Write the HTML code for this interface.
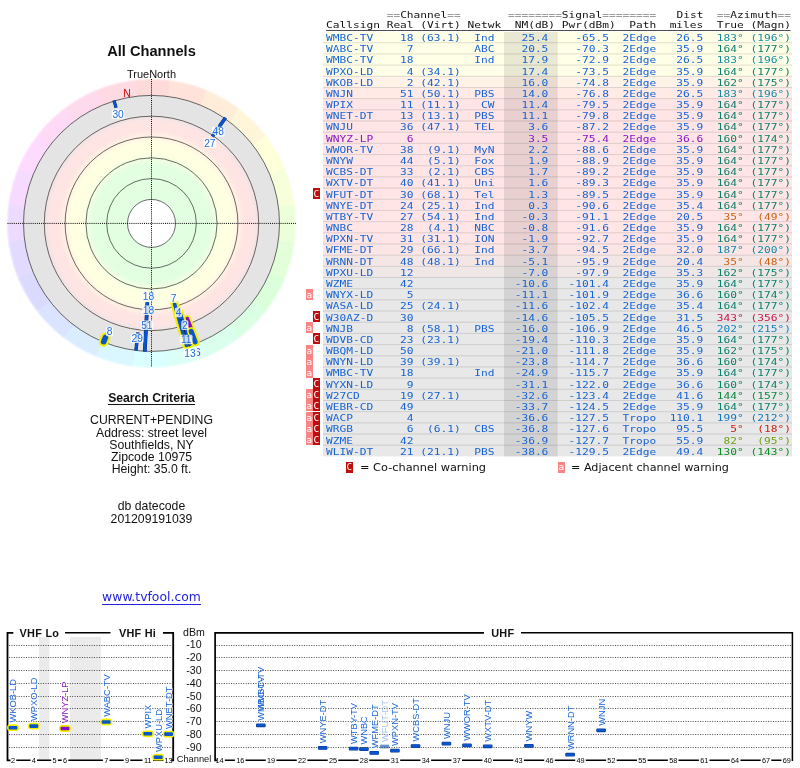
<!DOCTYPE html>
<html><head><meta charset="utf-8"><title>TV Fool - All Channels</title>
<style>
html,body{margin:0;padding:0;background:#fff;}
body{width:800px;height:768px;position:relative;overflow:hidden;font-family:"Liberation Sans",sans-serif;color:#111;}
#g{position:absolute;left:0;top:0;}
svg,.c,.lg{will-change:transform;}
.c{position:absolute;white-space:nowrap;text-align:center;left:0;width:303px;line-height:1;}
.m{position:absolute;white-space:pre;line-height:1;font-family:"DejaVu Sans Mono","Liberation Mono",monospace;font-size:9.3px;transform:scaleX(1.2038);transform-origin:0 0;left:325.7px;will-change:transform;}

.b{color:#1763d4;}
.p{color:#8a14c6;}
.k{color:#111;}
.e{color:#9c9c9c;font-weight:bold;}
.w{will-change:transform;position:absolute;width:6.74px;height:11.2px;color:#fff;font-family:"DejaVu Sans Mono","Liberation Mono",monospace;font-size:9.3px;line-height:11.2px;text-align:center;}
.wa{background:#fb8585;}
.wc{background:#bf0d0d;}
.lg{position:absolute;font-family:"DejaVu Sans","Liberation Sans",sans-serif;font-size:11.1px;line-height:1;white-space:nowrap;color:#111;}
svg text{font-family:"Liberation Sans",sans-serif;}
</style></head><body>

<svg id="g" width="800" height="768" viewBox="0 0 800 768">
<defs>
<radialGradient id="disk" gradientUnits="userSpaceOnUse" cx="151.5" cy="223.4" r="128">
<stop offset="0.0000" stop-color="#ffffff"/>
<stop offset="0.1844" stop-color="#ffffff"/>
<stop offset="0.1906" stop-color="#e2ffe2"/>
<stop offset="0.4531" stop-color="#e2ffe2"/>
<stop offset="0.5469" stop-color="#ffffe2"/>
<stop offset="0.6328" stop-color="#ffffe2"/>
<stop offset="0.7266" stop-color="#ffe4e4"/>
<stop offset="0.7969" stop-color="#ffe4e4"/>
<stop offset="0.8594" stop-color="#e4e4e4"/>
<stop offset="1.0000" stop-color="#e4e4e4"/>
</radialGradient>
<radialGradient id="fade" gradientUnits="userSpaceOnUse" cx="151.5" cy="223.4" r="146">
<stop offset="0" stop-color="#fff" stop-opacity="0"/><stop offset="0.9760" stop-color="#fff" stop-opacity="0"/><stop offset="1" stop-color="#fff" stop-opacity="1"/>
</radialGradient>
</defs>
<path d="M151.5 223.4L132.57 79.64A145 145 0 0 1 171.43 79.78Z" fill="#ffdada"/>
<path d="M151.5 223.4L170.43 79.64A145 145 0 0 1 207.92 89.83Z" fill="#ffe3da"/>
<path d="M151.5 223.4L206.99 89.44A145 145 0 0 1 240.57 108.98Z" fill="#ffedda"/>
<path d="M151.5 223.4L239.77 108.36A145 145 0 0 1 267.15 135.93Z" fill="#fff6da"/>
<path d="M151.5 223.4L266.54 135.13A145 145 0 0 1 285.85 168.85Z" fill="#ffffda"/>
<path d="M151.5 223.4L285.46 167.91A145 145 0 0 1 295.39 205.48Z" fill="#f6ffda"/>
<path d="M151.5 223.4L295.26 204.47A145 145 0 0 1 295.12 243.33Z" fill="#edffda"/>
<path d="M151.5 223.4L295.26 242.33A145 145 0 0 1 285.07 279.82Z" fill="#e3ffda"/>
<path d="M151.5 223.4L285.46 278.89A145 145 0 0 1 265.92 312.47Z" fill="#daffda"/>
<path d="M151.5 223.4L266.54 311.67A145 145 0 0 1 238.97 339.05Z" fill="#daffe3"/>
<path d="M151.5 223.4L239.77 338.44A145 145 0 0 1 206.05 357.75Z" fill="#daffed"/>
<path d="M151.5 223.4L206.99 357.36A145 145 0 0 1 169.42 367.29Z" fill="#dafff6"/>
<path d="M151.5 223.4L170.43 367.16A145 145 0 0 1 131.57 367.02Z" fill="#daffff"/>
<path d="M151.5 223.4L132.57 367.16A145 145 0 0 1 95.08 356.97Z" fill="#daf6ff"/>
<path d="M151.5 223.4L96.01 357.36A145 145 0 0 1 62.43 337.82Z" fill="#daedff"/>
<path d="M151.5 223.4L63.23 338.44A145 145 0 0 1 35.85 310.87Z" fill="#dae3ff"/>
<path d="M151.5 223.4L36.46 311.67A145 145 0 0 1 17.15 277.95Z" fill="#dadaff"/>
<path d="M151.5 223.4L17.54 278.89A145 145 0 0 1 7.61 241.32Z" fill="#e3daff"/>
<path d="M151.5 223.4L7.74 242.33A145 145 0 0 1 7.88 203.47Z" fill="#eddaff"/>
<path d="M151.5 223.4L7.74 204.47A145 145 0 0 1 17.93 166.98Z" fill="#f6daff"/>
<path d="M151.5 223.4L17.54 167.91A145 145 0 0 1 37.08 134.33Z" fill="#ffdaff"/>
<path d="M151.5 223.4L36.46 135.13A145 145 0 0 1 64.03 107.75Z" fill="#ffdaf6"/>
<path d="M151.5 223.4L63.23 108.36A145 145 0 0 1 96.95 89.05Z" fill="#ffdaed"/>
<path d="M151.5 223.4L96.01 89.44A145 145 0 0 1 133.58 79.51Z" fill="#ffdae3"/>
<circle cx="151.5" cy="223.4" r="147" fill="url(#fade)"/>
<circle cx="151.5" cy="223.4" r="128" fill="url(#disk)"/>
<circle cx="151.5" cy="223.4" r="24.0" fill="none" stroke="#262626" stroke-width="0.68"/>
<circle cx="151.5" cy="223.4" r="44.8" fill="none" stroke="#262626" stroke-width="0.68"/>
<circle cx="151.5" cy="223.4" r="65.6" fill="none" stroke="#262626" stroke-width="0.68"/>
<circle cx="151.5" cy="223.4" r="86.4" fill="none" stroke="#262626" stroke-width="0.68"/>
<circle cx="151.5" cy="223.4" r="107.2" fill="none" stroke="#262626" stroke-width="0.68"/>
<circle cx="151.5" cy="223.4" r="128.0" fill="none" stroke="#262626" stroke-width="0.68"/>
<path d="M7.5 223.4H296" stroke="#000" stroke-width="1" stroke-dasharray="1 1.1" fill="none"/>
<path d="M151.5 79V367" stroke="#000" stroke-width="1" stroke-dasharray="1 1.1" fill="none"/>
<path d="M116.12 107.69L113.93 100.51" stroke="#062a66" stroke-width="3.2"/>
<path d="M116.12 107.69L113.93 100.51" stroke="#0a55cc" stroke-width="2.4"/>
<path d="M212.87 135.75L225.20 118.14" stroke="#062a66" stroke-width="2.4"/>
<path d="M212.87 135.75L225.20 118.14" stroke="#0a55cc" stroke-width="1.6"/>
<path d="M219.47 126.33L225.49 117.73" stroke="#062a66" stroke-width="3.6"/>
<path d="M219.47 126.33L225.49 117.73" stroke="#0a55cc" stroke-width="2.8"/>
<path d="M138.09 332.58L135.90 350.45" stroke="#062a66" stroke-width="3.4"/>
<path d="M138.09 332.58L135.90 350.45" stroke="#0a55cc" stroke-width="2.6"/>
<path d="M147.37 302.29L144.77 351.72" stroke="#062a66" stroke-width="3.8"/>
<path d="M147.37 302.29L144.77 351.72" stroke="#0a55cc" stroke-width="3.0"/>
<path d="M105.42 337.44L103.70 341.71" stroke="#f4ee00" stroke-width="9.8" stroke-linecap="round"/>
<path d="M105.42 337.44L103.70 341.71" stroke="#0a55cc" stroke-width="5.6" stroke-linecap="round"/>
<path d="M187.22 318.94L195.98 342.36" stroke="#f4ee00" stroke-width="7.6" stroke-linecap="round"/>
<path d="M187.22 318.94L195.98 342.36" stroke="#8410c8" stroke-width="4.2" stroke-linecap="round"/>
<path d="M174.52 303.67L186.51 345.48" stroke="#f4ee00" stroke-width="8.2" stroke-linecap="round"/>
<path d="M179.47 311.04L190.11 344.39" stroke="#f4ee00" stroke-width="7.2" stroke-linecap="round"/>
<path d="M174.52 303.67L186.51 345.48" stroke="#0a55cc" stroke-width="3.6" stroke-linecap="round"/>
<path d="M179.47 311.04L190.11 344.39" stroke="#0a55cc" stroke-width="3.4" stroke-linecap="round"/>
<path d="M180.74 319.03L189.22 346.76" stroke="#08204a" stroke-width="1"/>
<path d="M191.21 331.33L195.11 341.93" stroke="#f4ee00" stroke-width="8.2" stroke-linecap="round"/>
<path d="M191.21 331.33L195.11 341.93" stroke="#0a55cc" stroke-width="5.0" stroke-linecap="round"/>
<clipPath id="c6"><rect x="197.2" y="340" width="8" height="20"/></clipPath><text x="197.9" y="355.6" font-size="10.2" fill="#8410c8" text-anchor="middle" clip-path="url(#c6)">6</text>
<rect x="111.8" y="109.5" width="12.7" height="9.6" rx="1.5" fill="#fff" fill-opacity="0.80"/>
<text x="118.1" y="118.0" font-size="10.2" fill="#1f6fe0" text-anchor="middle">30</text>
<rect x="211.8" y="126.8" width="12.7" height="9.6" rx="1.5" fill="#fff" fill-opacity="0.80"/>
<text x="218.2" y="135.2" font-size="10.2" fill="#1f6fe0" text-anchor="middle">48</text>
<rect x="203.5" y="138.4" width="12.7" height="9.6" rx="1.5" fill="#fff" fill-opacity="0.80"/>
<text x="209.8" y="146.8" font-size="10.2" fill="#1f6fe0" text-anchor="middle">27</text>
<rect x="142.2" y="291.5" width="12.7" height="9.6" rx="1.5" fill="#fff" fill-opacity="0.80"/>
<text x="148.5" y="299.9" font-size="10.2" fill="#1f6fe0" text-anchor="middle">18</text>
<rect x="142.2" y="305.5" width="12.7" height="9.6" rx="1.5" fill="#fff" fill-opacity="0.80"/>
<text x="148.5" y="313.9" font-size="10.2" fill="#1f6fe0" text-anchor="middle">18</text>
<rect x="140.5" y="320.5" width="12.7" height="9.6" rx="1.5" fill="#fff" fill-opacity="0.80"/>
<text x="146.8" y="328.9" font-size="10.2" fill="#1f6fe0" text-anchor="middle">51</text>
<rect x="130.8" y="333.5" width="12.7" height="9.6" rx="1.5" fill="#fff" fill-opacity="0.80"/>
<text x="137.2" y="341.9" font-size="10.2" fill="#1f6fe0" text-anchor="middle">29</text>
<rect x="106.0" y="326.7" width="7.1" height="9.6" rx="1.5" fill="#fff" fill-opacity="0.80"/>
<text x="109.5" y="335.1" font-size="10.2" fill="#1f6fe0" text-anchor="middle">8</text>
<rect x="170.1" y="293.5" width="7.1" height="9.6" rx="1.5" fill="#fff" fill-opacity="0.80"/>
<text x="173.7" y="301.9" font-size="10.2" fill="#1f6fe0" text-anchor="middle">7</text>
<rect x="174.9" y="307.6" width="7.1" height="9.6" rx="1.5" fill="#fff" fill-opacity="0.80"/>
<text x="178.5" y="316.0" font-size="10.2" fill="#1f6fe0" text-anchor="middle">4</text>
<rect x="181.3" y="320.3" width="7.1" height="9.6" rx="1.5" fill="#fff" fill-opacity="0.80"/>
<text x="184.9" y="328.8" font-size="10.2" fill="#1f6fe0" text-anchor="middle">2</text>
<rect x="179.8" y="334.7" width="12.7" height="9.6" rx="1.5" fill="#fff" fill-opacity="0.80"/>
<text x="186.2" y="343.1" font-size="10.2" fill="#1f6fe0" text-anchor="middle">11</text>
<rect x="183.7" y="348.6" width="12.7" height="9.6" rx="1.5" fill="#fff" fill-opacity="0.80"/>
<text x="190.0" y="357.0" font-size="10.2" fill="#1f6fe0" text-anchor="middle">13</text>
<text x="127.1" y="96.7" font-size="10.4" fill="#cc0808" text-anchor="middle">N</text>
<path d="M212.41 136.41L213.79 134.44" stroke="#062a66" stroke-width="3.6"/>
<path d="M212.41 136.41L213.79 134.44" stroke="#0a55cc" stroke-width="2.8"/>
<rect x="39" y="637" width="10.4" height="123" fill="#ebebeb"/>
<rect x="70" y="637" width="31" height="123" fill="#ebebeb"/>
<path d="M9 645.5H172M216.5 645.5H792" stroke="#4a4a4a" stroke-width="1" stroke-dasharray="1 1.43" fill="none"/>
<path d="M9 657.5H172M216.5 657.5H792" stroke="#4a4a4a" stroke-width="1" stroke-dasharray="1 1.43" fill="none"/>
<path d="M9 670.5H172M216.5 670.5H792" stroke="#4a4a4a" stroke-width="1" stroke-dasharray="1 1.43" fill="none"/>
<path d="M9 683.5H172M216.5 683.5H792" stroke="#4a4a4a" stroke-width="1" stroke-dasharray="1 1.43" fill="none"/>
<path d="M9 696.5H172M216.5 696.5H792" stroke="#4a4a4a" stroke-width="1" stroke-dasharray="1 1.43" fill="none"/>
<path d="M9 708.5H172M216.5 708.5H792" stroke="#4a4a4a" stroke-width="1" stroke-dasharray="1 1.43" fill="none"/>
<path d="M9 721.5H172M216.5 721.5H792" stroke="#4a4a4a" stroke-width="1" stroke-dasharray="1 1.43" fill="none"/>
<path d="M9 734.5H172M216.5 734.5H792" stroke="#4a4a4a" stroke-width="1" stroke-dasharray="1 1.43" fill="none"/>
<path d="M9 747.5H172M216.5 747.5H792" stroke="#4a4a4a" stroke-width="1" stroke-dasharray="1 1.43" fill="none"/>
<path d="M13.3 632.8 H7.5 V760.3 H10.5" stroke="#000" stroke-width="1.8" fill="none"/>
<path d="M65 632.8H110.5" stroke="#000" stroke-width="1.6" fill="none"/>
<path d="M163 632.8H173.2V760.3H171.5" stroke="#000" stroke-width="1.8" fill="none"/>
<path d="M484 632.8H215.1V760.3H217" stroke="#000" stroke-width="1.7" fill="none"/>
<path d="M521 632.8H792.4V761.0999999999999" stroke="#000" stroke-width="1.5" fill="none"/>
<path d="M16.3 760.3H30.5M37.1 760.3H51.3M57.9 760.3H61.7M68.3 760.3H102.9M109.5 760.3H123.7M130.3 760.3H142.5M153.1 760.3H163.3" stroke="#000" stroke-width="1.5" fill="none"/>
<text x="13.0" y="763.1" font-size="7.3" fill="#000" text-anchor="middle">2</text>
<text x="33.8" y="763.1" font-size="7.3" fill="#000" text-anchor="middle">4</text>
<text x="54.6" y="763.1" font-size="7.3" fill="#000" text-anchor="middle">5</text>
<text x="65.0" y="763.1" font-size="7.3" fill="#000" text-anchor="middle">6</text>
<text x="106.2" y="763.1" font-size="7.3" fill="#000" text-anchor="middle">7</text>
<text x="127.0" y="763.1" font-size="7.3" fill="#000" text-anchor="middle">9</text>
<text x="147.8" y="763.1" font-size="7.3" fill="#000" text-anchor="middle">11</text>
<text x="168.6" y="763.1" font-size="7.3" fill="#000" text-anchor="middle">13</text>
<path d="M224.9 760.3H234.9M245.5 760.3H265.8M276.4 760.3H296.8M307.4 760.3H327.7M338.3 760.3H358.6M369.2 760.3H389.6M400.2 760.3H420.5M431.1 760.3H451.4M462.0 760.3H482.4M493.0 760.3H513.3M523.9 760.3H544.2M554.8 760.3H575.2M585.8 760.3H606.1M616.7 760.3H637.0M647.6 760.3H667.9M678.5 760.3H698.9M709.5 760.3H729.8M740.4 760.3H760.7M771.3 760.3H781.4" stroke="#000" stroke-width="1.5" fill="none"/>
<text x="219.6" y="763.1" font-size="7.3" fill="#000" text-anchor="middle">14</text>
<text x="240.2" y="763.1" font-size="7.3" fill="#000" text-anchor="middle">16</text>
<text x="271.1" y="763.1" font-size="7.3" fill="#000" text-anchor="middle">19</text>
<text x="302.1" y="763.1" font-size="7.3" fill="#000" text-anchor="middle">22</text>
<text x="333.0" y="763.1" font-size="7.3" fill="#000" text-anchor="middle">25</text>
<text x="363.9" y="763.1" font-size="7.3" fill="#000" text-anchor="middle">28</text>
<text x="394.9" y="763.1" font-size="7.3" fill="#000" text-anchor="middle">31</text>
<text x="425.8" y="763.1" font-size="7.3" fill="#000" text-anchor="middle">34</text>
<text x="456.7" y="763.1" font-size="7.3" fill="#000" text-anchor="middle">37</text>
<text x="487.7" y="763.1" font-size="7.3" fill="#000" text-anchor="middle">40</text>
<text x="518.6" y="763.1" font-size="7.3" fill="#000" text-anchor="middle">43</text>
<text x="549.5" y="763.1" font-size="7.3" fill="#000" text-anchor="middle">46</text>
<text x="580.5" y="763.1" font-size="7.3" fill="#000" text-anchor="middle">49</text>
<text x="611.4" y="763.1" font-size="7.3" fill="#000" text-anchor="middle">52</text>
<text x="642.3" y="763.1" font-size="7.3" fill="#000" text-anchor="middle">55</text>
<text x="673.2" y="763.1" font-size="7.3" fill="#000" text-anchor="middle">58</text>
<text x="704.2" y="763.1" font-size="7.3" fill="#000" text-anchor="middle">61</text>
<text x="735.1" y="763.1" font-size="7.3" fill="#000" text-anchor="middle">64</text>
<text x="766.0" y="763.1" font-size="7.3" fill="#000" text-anchor="middle">67</text>
<text x="786.7" y="763.1" font-size="7.3" fill="#000" text-anchor="middle">69</text>
<text x="39.4" y="636.6" font-size="10.9" font-weight="bold" fill="#111" text-anchor="middle" letter-spacing="0.25">VHF Lo</text>
<text x="137.5" y="636.6" font-size="10.9" font-weight="bold" fill="#111" text-anchor="middle" letter-spacing="0.25">VHF Hi</text>
<text x="502.8" y="636.6" font-size="10.9" font-weight="bold" fill="#111" text-anchor="middle" letter-spacing="0.25">UHF</text>
<text x="194" y="636.2" font-size="10.6" fill="#111" text-anchor="middle">dBm</text>
<text x="194" y="647.5" font-size="10.6" fill="#111" text-anchor="middle">-10</text>
<text x="194" y="661.3" font-size="10.6" fill="#111" text-anchor="middle">-20</text>
<text x="194" y="674.0" font-size="10.6" fill="#111" text-anchor="middle">-30</text>
<text x="194" y="686.8" font-size="10.6" fill="#111" text-anchor="middle">-40</text>
<text x="194" y="699.6" font-size="10.6" fill="#111" text-anchor="middle">-50</text>
<text x="194" y="712.4" font-size="10.6" fill="#111" text-anchor="middle">-60</text>
<text x="194" y="725.1" font-size="10.6" fill="#111" text-anchor="middle">-70</text>
<text x="194" y="737.9" font-size="10.6" fill="#111" text-anchor="middle">-80</text>
<text x="194" y="750.7" font-size="10.6" fill="#111" text-anchor="middle">-90</text>
<text x="194" y="762.3" font-size="9.3" fill="#111" text-anchor="middle">Channel</text>
<rect x="7.0" y="724.3" width="12" height="6.8" rx="3.4" fill="#f4ee00"/>
<rect x="8.6" y="725.9" width="8.8" height="3.6" rx="0.8" fill="#0a55cc"/>
<text transform="translate(16.4 722.5) rotate(-90)" font-family="'DejaVu Sans Condensed','DejaVu Sans',sans-serif" font-size="9.3" fill="#1763d4" fill-opacity="1" stroke="#fff" stroke-width="1.3" stroke-opacity="0.85" paint-order="stroke">WKOB-LD</text>
<rect x="27.8" y="722.7" width="12" height="6.8" rx="3.4" fill="#f4ee00"/>
<rect x="29.4" y="724.3" width="8.8" height="3.6" rx="0.8" fill="#0a55cc"/>
<text transform="translate(37.2 720.9) rotate(-90)" font-family="'DejaVu Sans Condensed','DejaVu Sans',sans-serif" font-size="9.3" fill="#1763d4" fill-opacity="1" stroke="#fff" stroke-width="1.3" stroke-opacity="0.85" paint-order="stroke">WPXO-LD</text>
<rect x="59.0" y="725.1" width="12" height="6.8" rx="3.4" fill="#f4ee00"/>
<rect x="60.6" y="726.7" width="8.8" height="3.6" rx="0.8" fill="#8410c8"/>
<text transform="translate(68.4 723.3) rotate(-90)" font-family="'DejaVu Sans Condensed','DejaVu Sans',sans-serif" font-size="9.3" fill="#8a14c6" fill-opacity="1" stroke="#fff" stroke-width="1.3" stroke-opacity="0.85" paint-order="stroke">WNYZ-LP</text>
<rect x="100.2" y="718.6" width="12" height="6.8" rx="3.4" fill="#f4ee00"/>
<rect x="101.8" y="720.2" width="8.8" height="3.6" rx="0.8" fill="#0a55cc"/>
<text transform="translate(109.6 716.8) rotate(-90)" font-family="'DejaVu Sans Condensed','DejaVu Sans',sans-serif" font-size="9.3" fill="#1763d4" fill-opacity="1" stroke="#fff" stroke-width="1.3" stroke-opacity="0.85" paint-order="stroke">WABC-TV</text>
<rect x="141.8" y="730.4" width="12" height="6.8" rx="3.4" fill="#f4ee00"/>
<rect x="143.4" y="732.0" width="8.8" height="3.6" rx="0.8" fill="#0a55cc"/>
<text transform="translate(151.2 728.6) rotate(-90)" font-family="'DejaVu Sans Condensed','DejaVu Sans',sans-serif" font-size="9.3" fill="#1763d4" fill-opacity="1" stroke="#fff" stroke-width="1.3" stroke-opacity="0.85" paint-order="stroke">WPIX</text>
<rect x="152.2" y="753.8" width="12" height="6.8" rx="3.4" fill="#f4ee00"/>
<rect x="153.8" y="755.4" width="8.8" height="3.6" rx="0.8" fill="#0a55cc"/>
<text transform="translate(161.6 752.0) rotate(-90)" font-family="'DejaVu Sans Condensed','DejaVu Sans',sans-serif" font-size="9.3" fill="#1763d4" fill-opacity="1" stroke="#fff" stroke-width="1.3" stroke-opacity="0.85" paint-order="stroke">WPXU-LD</text>
<rect x="162.6" y="730.7" width="12" height="6.8" rx="3.4" fill="#f4ee00"/>
<rect x="164.2" y="732.3" width="8.8" height="3.6" rx="0.8" fill="#0a55cc"/>
<text transform="translate(172.0 728.9) rotate(-90)" font-family="'DejaVu Sans Condensed','DejaVu Sans',sans-serif" font-size="9.3" fill="#1763d4" fill-opacity="1" stroke="#fff" stroke-width="1.3" stroke-opacity="0.85" paint-order="stroke">WNET-DT</text>
<rect x="256.0" y="723.4" width="9.6" height="3.8" rx="1" fill="#0a3a8c" fill-opacity="1"/>
<rect x="256.5" y="724.0" width="8.6" height="2.6" rx="0.6" fill="#0a55cc" fill-opacity="1"/>
<text transform="translate(264.2 720.7) rotate(-90)" font-family="'DejaVu Sans Condensed','DejaVu Sans',sans-serif" font-size="9.3" fill="#1763d4" fill-opacity="1" stroke="#fff" stroke-width="1.3" stroke-opacity="0.85" paint-order="stroke">WMBC-TV</text>
<rect x="317.9" y="746.0" width="9.6" height="3.8" rx="1" fill="#0a3a8c" fill-opacity="1"/>
<rect x="318.4" y="746.6" width="8.6" height="2.6" rx="0.6" fill="#0a55cc" fill-opacity="1"/>
<text transform="translate(326.1 743.3) rotate(-90)" font-family="'DejaVu Sans Condensed','DejaVu Sans',sans-serif" font-size="9.3" fill="#1763d4" fill-opacity="1" stroke="#fff" stroke-width="1.3" stroke-opacity="0.85" paint-order="stroke">WNYE-DT</text>
<rect x="348.8" y="746.7" width="9.6" height="3.8" rx="1" fill="#0a3a8c" fill-opacity="1"/>
<rect x="349.3" y="747.3" width="8.6" height="2.6" rx="0.6" fill="#0a55cc" fill-opacity="1"/>
<text transform="translate(357.0 744.0) rotate(-90)" font-family="'DejaVu Sans Condensed','DejaVu Sans',sans-serif" font-size="9.3" fill="#1763d4" fill-opacity="1" stroke="#fff" stroke-width="1.3" stroke-opacity="0.85" paint-order="stroke">WTBY-TV</text>
<rect x="359.1" y="747.3" width="9.6" height="3.8" rx="1" fill="#0a3a8c" fill-opacity="1"/>
<rect x="359.6" y="747.9" width="8.6" height="2.6" rx="0.6" fill="#0a55cc" fill-opacity="1"/>
<text transform="translate(367.3 744.6) rotate(-90)" font-family="'DejaVu Sans Condensed','DejaVu Sans',sans-serif" font-size="9.3" fill="#1763d4" fill-opacity="1" stroke="#fff" stroke-width="1.3" stroke-opacity="0.85" paint-order="stroke">WNBC</text>
<rect x="369.4" y="751.0" width="9.6" height="3.8" rx="1" fill="#0a3a8c" fill-opacity="1"/>
<rect x="369.9" y="751.6" width="8.6" height="2.6" rx="0.6" fill="#0a55cc" fill-opacity="1"/>
<text transform="translate(377.6 748.3) rotate(-90)" font-family="'DejaVu Sans Condensed','DejaVu Sans',sans-serif" font-size="9.3" fill="#1763d4" fill-opacity="1" stroke="#fff" stroke-width="1.3" stroke-opacity="0.85" paint-order="stroke">WFME-DT</text>
<rect x="379.8" y="744.6" width="9.6" height="3.8" rx="1" fill="#0a3a8c" fill-opacity="0.4"/>
<rect x="380.3" y="745.2" width="8.6" height="2.6" rx="0.6" fill="#0a55cc" fill-opacity="0.4"/>
<text transform="translate(388.0 741.9) rotate(-90)" font-family="'DejaVu Sans Condensed','DejaVu Sans',sans-serif" font-size="9.3" fill="#1763d4" fill-opacity="0.4" stroke="#fff" stroke-width="1.3" stroke-opacity="0.34" paint-order="stroke">WFUT-DT</text>
<rect x="390.1" y="748.7" width="9.6" height="3.8" rx="1" fill="#0a3a8c" fill-opacity="1"/>
<rect x="390.6" y="749.3" width="8.6" height="2.6" rx="0.6" fill="#0a55cc" fill-opacity="1"/>
<text transform="translate(398.3 746.0) rotate(-90)" font-family="'DejaVu Sans Condensed','DejaVu Sans',sans-serif" font-size="9.3" fill="#1763d4" fill-opacity="1" stroke="#fff" stroke-width="1.3" stroke-opacity="0.85" paint-order="stroke">WPXN-TV</text>
<rect x="410.7" y="744.2" width="9.6" height="3.8" rx="1" fill="#0a3a8c" fill-opacity="1"/>
<rect x="411.2" y="744.8" width="8.6" height="2.6" rx="0.6" fill="#0a55cc" fill-opacity="1"/>
<text transform="translate(418.9 741.5) rotate(-90)" font-family="'DejaVu Sans Condensed','DejaVu Sans',sans-serif" font-size="9.3" fill="#1763d4" fill-opacity="1" stroke="#fff" stroke-width="1.3" stroke-opacity="0.85" paint-order="stroke">WCBS-DT</text>
<rect x="441.6" y="741.7" width="9.6" height="3.8" rx="1" fill="#0a3a8c" fill-opacity="1"/>
<rect x="442.1" y="742.3" width="8.6" height="2.6" rx="0.6" fill="#0a55cc" fill-opacity="1"/>
<text transform="translate(449.8 739.0) rotate(-90)" font-family="'DejaVu Sans Condensed','DejaVu Sans',sans-serif" font-size="9.3" fill="#1763d4" fill-opacity="1" stroke="#fff" stroke-width="1.3" stroke-opacity="0.85" paint-order="stroke">WNJU</text>
<rect x="462.2" y="743.5" width="9.6" height="3.8" rx="1" fill="#0a3a8c" fill-opacity="1"/>
<rect x="462.7" y="744.1" width="8.6" height="2.6" rx="0.6" fill="#0a55cc" fill-opacity="1"/>
<text transform="translate(470.4 740.8) rotate(-90)" font-family="'DejaVu Sans Condensed','DejaVu Sans',sans-serif" font-size="9.3" fill="#1763d4" fill-opacity="1" stroke="#fff" stroke-width="1.3" stroke-opacity="0.85" paint-order="stroke">WWOR-TV</text>
<rect x="482.9" y="744.4" width="9.6" height="3.8" rx="1" fill="#0a3a8c" fill-opacity="1"/>
<rect x="483.4" y="745.0" width="8.6" height="2.6" rx="0.6" fill="#0a55cc" fill-opacity="1"/>
<text transform="translate(491.1 741.7) rotate(-90)" font-family="'DejaVu Sans Condensed','DejaVu Sans',sans-serif" font-size="9.3" fill="#1763d4" fill-opacity="1" stroke="#fff" stroke-width="1.3" stroke-opacity="0.85" paint-order="stroke">WXTV-DT</text>
<rect x="524.1" y="743.9" width="9.6" height="3.8" rx="1" fill="#0a3a8c" fill-opacity="1"/>
<rect x="524.6" y="744.5" width="8.6" height="2.6" rx="0.6" fill="#0a55cc" fill-opacity="1"/>
<text transform="translate(532.3 741.2) rotate(-90)" font-family="'DejaVu Sans Condensed','DejaVu Sans',sans-serif" font-size="9.3" fill="#1763d4" fill-opacity="1" stroke="#fff" stroke-width="1.3" stroke-opacity="0.85" paint-order="stroke">WNYW</text>
<rect x="565.3" y="752.8" width="9.6" height="3.8" rx="1" fill="#0a3a8c" fill-opacity="1"/>
<rect x="565.8" y="753.4" width="8.6" height="2.6" rx="0.6" fill="#0a55cc" fill-opacity="1"/>
<text transform="translate(573.5 750.1) rotate(-90)" font-family="'DejaVu Sans Condensed','DejaVu Sans',sans-serif" font-size="9.3" fill="#1763d4" fill-opacity="1" stroke="#fff" stroke-width="1.3" stroke-opacity="0.85" paint-order="stroke">WRNN-DT</text>
<rect x="596.3" y="728.4" width="9.6" height="3.8" rx="1" fill="#0a3a8c" fill-opacity="1"/>
<rect x="596.8" y="729.0" width="8.6" height="2.6" rx="0.6" fill="#0a55cc" fill-opacity="1"/>
<text transform="translate(604.5 725.7) rotate(-90)" font-family="'DejaVu Sans Condensed','DejaVu Sans',sans-serif" font-size="9.3" fill="#1763d4" fill-opacity="1" stroke="#fff" stroke-width="1.3" stroke-opacity="0.85" paint-order="stroke">WNJN</text>
<text transform="translate(264.2 711.3) rotate(-90)" font-family="'DejaVu Sans Condensed','DejaVu Sans',sans-serif" font-size="9.3" fill="#1763d4" fill-opacity="1" stroke="#fff" stroke-width="0" stroke-opacity="0" paint-order="stroke">WMBC-TV</text>
</svg>
<div class="c" style="top:44.2px;font-size:14.65px;font-weight:bold;">All Channels</div>
<div class="c" style="top:69.4px;font-size:11px;">TrueNorth</div>
<div class="c" style="top:391.5px;font-size:12.2px;font-weight:bold;"><span style="border-bottom:1.2px solid #111;padding-bottom:0;display:inline-block;line-height:12.4px;">Search Criteria</span></div>
<div class="c" style="top:413.73px;font-size:12.25px;">CURRENT+PENDING</div>
<div class="c" style="top:426.73px;font-size:12.25px;">Address: street level</div>
<div class="c" style="top:438.73px;font-size:12.25px;">Southfields, NY</div>
<div class="c" style="top:450.73px;font-size:12.25px;">Zipcode 10975</div>
<div class="c" style="top:463.33px;font-size:12.25px;">Height: 35.0 ft.</div>
<div class="c" style="top:499.73px;font-size:12.25px;">db datecode</div>
<div class="c" style="top:512.73px;font-size:12.25px;">201209191039</div>
<div class="c" style="top:591.3px;font-family:'DejaVu Sans','Liberation Sans',sans-serif;font-size:12.4px;color:#2222dd;"><span style="border-bottom:1px solid #2222dd;padding-bottom:0px;">www.tvfool.com</span></div>
<svg style="position:absolute;left:0;top:0;" width="800" height="768" viewBox="0 0 800 768">
<rect x="323.0" y="32.00" width="469.0" height="10.78" fill="#ffffe8"/>
<rect x="323.0" y="42.73" width="469.0" height="11.23" fill="#ffffe8"/>
<rect x="323.0" y="53.91" width="469.0" height="11.23" fill="#ffffe8"/>
<rect x="323.0" y="65.09" width="469.0" height="11.23" fill="#ffffe8"/>
<rect x="323.0" y="76.27" width="469.0" height="11.23" fill="#fff2e6"/>
<rect x="323.0" y="87.45" width="469.0" height="11.23" fill="#ffeae6"/>
<rect x="323.0" y="98.63" width="469.0" height="11.23" fill="#ffe5e5"/>
<rect x="323.0" y="109.81" width="469.0" height="11.23" fill="#ffe5e5"/>
<rect x="323.0" y="120.99" width="469.0" height="11.23" fill="#ffe5e5"/>
<rect x="323.0" y="132.17" width="469.0" height="11.23" fill="#ffe5e5"/>
<rect x="323.0" y="143.35" width="469.0" height="11.23" fill="#ffe5e5"/>
<rect x="323.0" y="154.53" width="469.0" height="11.23" fill="#ffe5e5"/>
<rect x="323.0" y="165.71" width="469.0" height="11.23" fill="#ffe5e5"/>
<rect x="323.0" y="176.89" width="469.0" height="11.23" fill="#ffe5e5"/>
<rect x="323.0" y="188.07" width="469.0" height="11.23" fill="#ffe5e5"/>
<rect x="323.0" y="199.25" width="469.0" height="11.23" fill="#ffe5e5"/>
<rect x="323.0" y="210.43" width="469.0" height="11.23" fill="#ffe5e5"/>
<rect x="323.0" y="221.61" width="469.0" height="11.23" fill="#ffe5e5"/>
<rect x="323.0" y="232.79" width="469.0" height="11.23" fill="#ffe5e5"/>
<rect x="323.0" y="243.97" width="469.0" height="11.23" fill="#fbe6e5"/>
<rect x="323.0" y="255.15" width="469.0" height="11.23" fill="#f5e6e6"/>
<rect x="323.0" y="266.33" width="469.0" height="11.23" fill="#eee7e6"/>
<rect x="323.0" y="277.51" width="469.0" height="11.23" fill="#e7e8e7"/>
<rect x="323.0" y="288.69" width="469.0" height="11.23" fill="#e7e8e7"/>
<rect x="323.0" y="299.87" width="469.0" height="11.23" fill="#e7e8e7"/>
<rect x="323.0" y="311.05" width="469.0" height="11.23" fill="#e7e8e7"/>
<rect x="323.0" y="322.23" width="469.0" height="11.23" fill="#e7e8e7"/>
<rect x="323.0" y="333.41" width="469.0" height="11.23" fill="#e7e8e7"/>
<rect x="323.0" y="344.59" width="469.0" height="11.23" fill="#e7e8e7"/>
<rect x="323.0" y="355.77" width="469.0" height="11.23" fill="#e7e8e7"/>
<rect x="323.0" y="366.95" width="469.0" height="11.23" fill="#e7e8e7"/>
<rect x="323.0" y="378.13" width="469.0" height="11.23" fill="#e7e8e7"/>
<rect x="323.0" y="389.31" width="469.0" height="11.23" fill="#e7e8e7"/>
<rect x="323.0" y="400.49" width="469.0" height="11.23" fill="#e7e8e7"/>
<rect x="323.0" y="411.67" width="469.0" height="11.23" fill="#e7e8e7"/>
<rect x="323.0" y="422.85" width="469.0" height="11.23" fill="#e7e8e7"/>
<rect x="323.0" y="434.03" width="469.0" height="11.23" fill="#e7e8e7"/>
<rect x="323.0" y="445.21" width="469.0" height="11.23" fill="#e7e8e7"/>
<rect x="504.0" y="32" width="53.700000000000045" height="424.39" fill="#000" fill-opacity="0.09"/>
<rect x="323.0" y="42.23" width="469.0" height="1" fill="#000" fill-opacity="0.13"/>
<rect x="323.0" y="53.41" width="469.0" height="1" fill="#000" fill-opacity="0.13"/>
<rect x="323.0" y="64.59" width="469.0" height="1" fill="#000" fill-opacity="0.13"/>
<rect x="323.0" y="75.77" width="469.0" height="1" fill="#000" fill-opacity="0.13"/>
<rect x="323.0" y="86.95" width="469.0" height="1" fill="#000" fill-opacity="0.13"/>
<rect x="323.0" y="98.13" width="469.0" height="1" fill="#000" fill-opacity="0.13"/>
<rect x="323.0" y="109.31" width="469.0" height="1" fill="#000" fill-opacity="0.13"/>
<rect x="323.0" y="120.49" width="469.0" height="1" fill="#000" fill-opacity="0.13"/>
<rect x="323.0" y="131.67" width="469.0" height="1" fill="#000" fill-opacity="0.13"/>
<rect x="323.0" y="142.85" width="469.0" height="1" fill="#000" fill-opacity="0.13"/>
<rect x="323.0" y="154.03" width="469.0" height="1" fill="#000" fill-opacity="0.13"/>
<rect x="323.0" y="165.21" width="469.0" height="1" fill="#000" fill-opacity="0.13"/>
<rect x="323.0" y="176.39" width="469.0" height="1" fill="#000" fill-opacity="0.13"/>
<rect x="323.0" y="187.57" width="469.0" height="1" fill="#000" fill-opacity="0.13"/>
<rect x="323.0" y="198.75" width="469.0" height="1" fill="#000" fill-opacity="0.13"/>
<rect x="323.0" y="209.93" width="469.0" height="1" fill="#000" fill-opacity="0.13"/>
<rect x="323.0" y="221.11" width="469.0" height="1" fill="#000" fill-opacity="0.13"/>
<rect x="323.0" y="232.29" width="469.0" height="1" fill="#000" fill-opacity="0.13"/>
<rect x="323.0" y="243.47" width="469.0" height="1" fill="#000" fill-opacity="0.13"/>
<rect x="323.0" y="254.65" width="469.0" height="1" fill="#000" fill-opacity="0.13"/>
<rect x="323.0" y="265.83" width="469.0" height="1" fill="#000" fill-opacity="0.13"/>
<rect x="323.0" y="277.01" width="469.0" height="1" fill="#000" fill-opacity="0.13"/>
<rect x="323.0" y="288.19" width="469.0" height="1" fill="#000" fill-opacity="0.13"/>
<rect x="323.0" y="299.37" width="469.0" height="1" fill="#000" fill-opacity="0.13"/>
<rect x="323.0" y="310.55" width="469.0" height="1" fill="#000" fill-opacity="0.13"/>
<rect x="323.0" y="321.73" width="469.0" height="1" fill="#000" fill-opacity="0.13"/>
<rect x="323.0" y="332.91" width="469.0" height="1" fill="#000" fill-opacity="0.13"/>
<rect x="323.0" y="344.09" width="469.0" height="1" fill="#000" fill-opacity="0.13"/>
<rect x="323.0" y="355.27" width="469.0" height="1" fill="#000" fill-opacity="0.13"/>
<rect x="323.0" y="366.45" width="469.0" height="1" fill="#000" fill-opacity="0.13"/>
<rect x="323.0" y="377.63" width="469.0" height="1" fill="#000" fill-opacity="0.13"/>
<rect x="323.0" y="388.81" width="469.0" height="1" fill="#000" fill-opacity="0.13"/>
<rect x="323.0" y="399.99" width="469.0" height="1" fill="#000" fill-opacity="0.13"/>
<rect x="323.0" y="411.17" width="469.0" height="1" fill="#000" fill-opacity="0.13"/>
<rect x="323.0" y="422.35" width="469.0" height="1" fill="#000" fill-opacity="0.13"/>
<rect x="323.0" y="433.53" width="469.0" height="1" fill="#000" fill-opacity="0.13"/>
<rect x="323.0" y="444.71" width="469.0" height="1" fill="#000" fill-opacity="0.13"/>
<rect x="326" y="30.05" width="464.5" height="0.95" fill="#444"/>
</svg>
<div class="m" style="top:9.63px;"><span class="k">         <span class="e">==</span>Channel<span class="e">==</span>       <span class="e">========</span>Signal<span class="e">========</span>   Dist  <span class="e">==</span>Azimuth<span class="e">==</span></span></div>
<div class="m" style="top:20.43px;"><span class="k">Callsign Real (Virt) Netwk  NM(dB) Pwr(dBm)  Path  miles  True (Magn)</span></div>
<div class="m" style="top:33.03px;"><span class="b">WMBC-TV    18 (63.1)  Ind    25.4    -65.5  2Edge   26.5  </span><span style="color:#108da3">183° (196°)</span></div>
<div class="m" style="top:44.21px;"><span class="b">WABC-TV     7         ABC    20.5    -70.3  2Edge   35.9  </span><span style="color:#0d806c">164° (177°)</span></div>
<div class="m" style="top:55.39px;"><span class="b">WMBC-TV    18         Ind    17.9    -72.9  2Edge   26.5  </span><span style="color:#108da3">183° (196°)</span></div>
<div class="m" style="top:66.57px;"><span class="b">WPXO-LD     4 (34.1)         17.4    -73.5  2Edge   35.9  </span><span style="color:#0d806c">164° (177°)</span></div>
<div class="m" style="top:77.75px;"><span class="b">WKOB-LD     2 (42.1)         16.0    -74.8  2Edge   35.9  </span><span style="color:#0d8069">162° (175°)</span></div>
<div class="m" style="top:88.93px;"><span class="b">WNJN       51 (50.1)  PBS    14.0    -76.8  2Edge   26.5  </span><span style="color:#108da3">183° (196°)</span></div>
<div class="m" style="top:100.11px;"><span class="b">WPIX       11 (11.1)   CW    11.4    -79.5  2Edge   35.9  </span><span style="color:#0d806c">164° (177°)</span></div>
<div class="m" style="top:111.29px;"><span class="b">WNET-DT    13 (13.1)  PBS    11.1    -79.8  2Edge   35.9  </span><span style="color:#0d806c">164° (177°)</span></div>
<div class="m" style="top:122.47px;"><span class="b">WNJU       36 (47.1)  TEL     3.6    -87.2  2Edge   35.9  </span><span style="color:#0d806c">164° (177°)</span></div>
<div class="m" style="top:133.65px;"><span class="p">WNYZ-LP     6                 3.5    -75.4  2Edge   36.6  </span><span style="color:#0d8166">160° (174°)</span></div>
<div class="m" style="top:144.83px;"><span class="b">WWOR-TV    38  (9.1)  MyN     2.2    -88.6  2Edge   35.9  </span><span style="color:#0d806c">164° (177°)</span></div>
<div class="m" style="top:156.01px;"><span class="b">WNYW       44  (5.1)  Fox     1.9    -88.9  2Edge   35.9  </span><span style="color:#0d806c">164° (177°)</span></div>
<div class="m" style="top:167.19px;"><span class="b">WCBS-DT    33  (2.1)  CBS     1.7    -89.2  2Edge   35.9  </span><span style="color:#0d806c">164° (177°)</span></div>
<div class="m" style="top:178.37px;"><span class="b">WXTV-DT    40 (41.1)  Uni     1.6    -89.3  2Edge   35.9  </span><span style="color:#0d806c">164° (177°)</span></div>
<div class="m" style="top:189.55px;"><span class="b">WFUT-DT    30 (68.1)  Tel     1.3    -89.5  2Edge   35.9  </span><span style="color:#0d806c">164° (177°)</span></div>
<div class="w wc" style="left:312.82px;top:188.07px;">C</div>
<div class="m" style="top:200.73px;"><span class="b">WNYE-DT    24 (25.1)  Ind     0.3    -90.6  2Edge   35.4  </span><span style="color:#0d806c">164° (177°)</span></div>
<div class="m" style="top:211.91px;"><span class="b">WTBY-TV    27 (54.1)  Ind    -0.3    -91.1  2Edge   20.5  </span><span style="color:#cc6214"> 35°  (49°)</span></div>
<div class="m" style="top:223.09px;"><span class="b">WNBC       28  (4.1)  NBC    -0.8    -91.6  2Edge   35.9  </span><span style="color:#0d806c">164° (177°)</span></div>
<div class="m" style="top:234.27px;"><span class="b">WPXN-TV    31 (31.1)  ION    -1.9    -92.7  2Edge   35.9  </span><span style="color:#0d806c">164° (177°)</span></div>
<div class="m" style="top:245.45px;"><span class="b">WFME-DT    29 (66.1)  Ind    -3.7    -94.5  2Edge   32.0  </span><span style="color:#1189aa">187° (200°)</span></div>
<div class="m" style="top:256.63px;"><span class="b">WRNN-DT    48 (48.1)  Ind    -5.1    -95.9  2Edge   20.4  </span><span style="color:#cc6214"> 35°  (48°)</span></div>
<div class="m" style="top:267.81px;"><span class="b">WPXU-LD    12                -7.0    -97.9  2Edge   35.3  </span><span style="color:#0d8069">162° (175°)</span></div>
<div class="m" style="top:278.99px;"><span class="b">WZME       42               -10.6   -101.4  2Edge   35.9  </span><span style="color:#0d806c">164° (177°)</span></div>
<div class="m" style="top:290.17px;"><span class="b">WNYX-LD     5               -11.1   -101.9  2Edge   36.6  </span><span style="color:#0d8166">160° (174°)</span></div>
<div class="w wa" style="left:306.08px;top:288.69px;">a</div>
<div class="m" style="top:301.35px;"><span class="b">WASA-LD    25 (24.1)        -11.6   -102.4  2Edge   35.4  </span><span style="color:#0d806c">164° (177°)</span></div>
<div class="m" style="top:312.53px;"><span class="b">W30AZ-D    30               -14.6   -105.5  2Edge   31.5  </span><span style="color:#cc1448">343° (356°)</span></div>
<div class="w wc" style="left:312.82px;top:311.05px;">C</div>
<div class="m" style="top:323.71px;"><span class="b">WNJB        8 (58.1)  PBS   -16.0   -106.9  2Edge   46.5  </span><span style="color:#1382c2">202° (215°)</span></div>
<div class="w wa" style="left:306.08px;top:322.23px;">a</div>
<div class="m" style="top:334.89px;"><span class="b">WDVB-CD    23 (23.1)        -19.4   -110.3  2Edge   35.9  </span><span style="color:#0d806c">164° (177°)</span></div>
<div class="w wc" style="left:312.82px;top:333.41px;">C</div>
<div class="m" style="top:346.07px;"><span class="b">WBQM-LD    50               -21.0   -111.8  2Edge   35.9  </span><span style="color:#0d8069">162° (175°)</span></div>
<div class="w wa" style="left:306.08px;top:344.59px;">a</div>
<div class="m" style="top:357.25px;"><span class="b">WNYN-LD    39 (39.1)        -23.8   -114.7  2Edge   36.6  </span><span style="color:#0d8166">160° (174°)</span></div>
<div class="w wa" style="left:306.08px;top:355.77px;">a</div>
<div class="m" style="top:368.43px;"><span class="b">WMBC-TV    18         Ind   -24.9   -115.7  2Edge   35.9  </span><span style="color:#0d806c">164° (177°)</span></div>
<div class="w wa" style="left:306.08px;top:366.95px;">a</div>
<div class="m" style="top:379.61px;"><span class="b">WYXN-LD     9               -31.1   -122.0  2Edge   36.6  </span><span style="color:#0d8166">160° (174°)</span></div>
<div class="w wc" style="left:312.82px;top:378.13px;">C</div>
<div class="m" style="top:390.79px;"><span class="b">W27CD      19 (27.1)        -32.6   -123.4  2Edge   41.6  </span><span style="color:#0e883f">144° (157°)</span></div>
<div class="w wa" style="left:306.08px;top:389.31px;">a</div>
<div class="w wc" style="left:312.82px;top:389.31px;">C</div>
<div class="m" style="top:401.97px;"><span class="b">WEBR-CD    49               -33.7   -124.5  2Edge   35.9  </span><span style="color:#0d806c">164° (177°)</span></div>
<div class="w wa" style="left:306.08px;top:400.49px;">a</div>
<div class="w wc" style="left:312.82px;top:400.49px;">C</div>
<div class="m" style="top:413.15px;"><span class="b">WACP        4               -36.6   -127.5  Tropo  110.1  </span><span style="color:#1376bd">199° (212°)</span></div>
<div class="w wa" style="left:306.08px;top:411.67px;">a</div>
<div class="w wc" style="left:312.82px;top:411.67px;">C</div>
<div class="m" style="top:424.33px;"><span class="b">WRGB        6  (6.1)  CBS   -36.8   -127.6  Tropo   95.5  </span><span style="color:#cc1f14">  5°  (18°)</span></div>
<div class="w wa" style="left:306.08px;top:422.85px;">a</div>
<div class="w wc" style="left:312.82px;top:422.85px;">C</div>
<div class="m" style="top:435.51px;"><span class="b">WZME       42               -36.9   -127.7  Tropo   55.9  </span><span style="color:#6ca110"> 82°  (95°)</span></div>
<div class="w wa" style="left:306.08px;top:434.03px;">a</div>
<div class="w wc" style="left:312.82px;top:434.03px;">C</div>
<div class="m" style="top:446.69px;"><span class="b">WLIW-DT    21 (21.1)  PBS   -38.6   -129.5  2Edge   49.4  </span><span style="color:#0e8f24">130° (143°)</span></div>
<div class="w wc" style="left:346.4px;top:461.8px;height:10.8px;line-height:10.8px;">C</div>
<div class="lg" style="left:360.3px;top:462.0px;font-size:11.33px;">= Co-channel warning</div>
<div class="w wa" style="left:557.5px;top:461.8px;height:10.8px;line-height:10.8px;">a</div>
<div class="lg" style="left:571.2px;top:462.0px;font-size:11.18px;">= Adjacent channel warning</div>
</body></html>
